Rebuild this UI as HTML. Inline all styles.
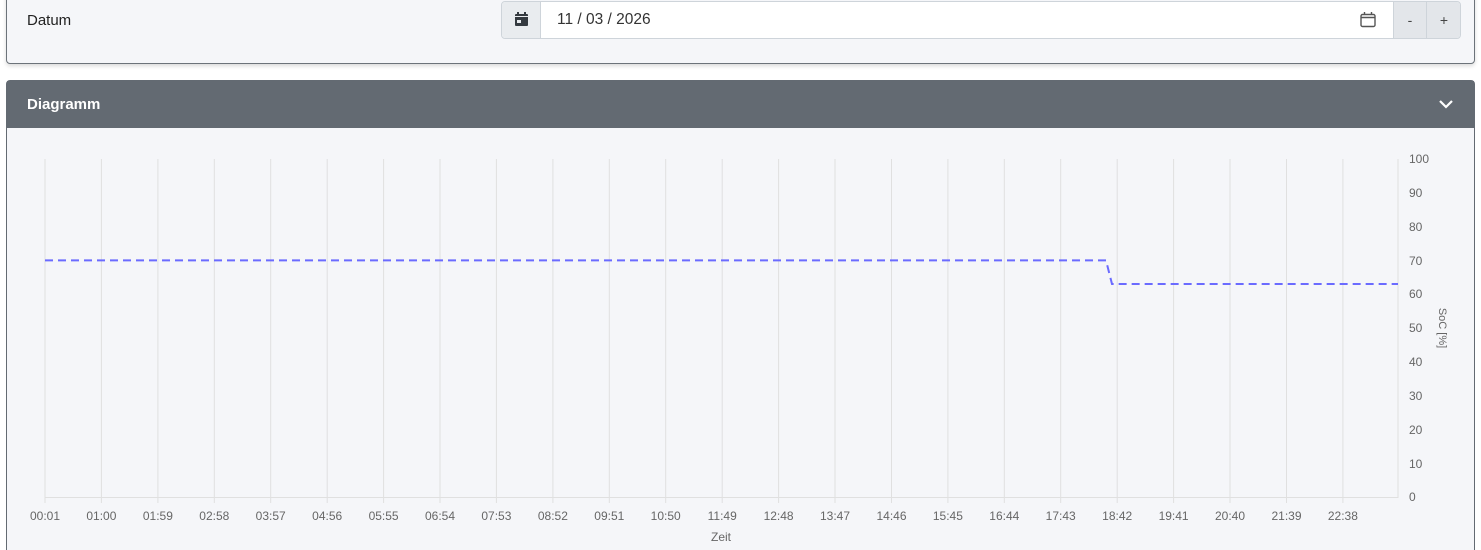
<!DOCTYPE html>
<html style="overflow:hidden;height:550px"><head><meta charset="utf-8"><style>
body{margin:0;background:#fff;width:1481px;height:550px;overflow:hidden;font-family:"Liberation Sans",sans-serif;position:relative}
.card1{position:absolute;left:6px;top:-10px;width:1467px;height:72px;background:#f5f6f9;border:1px solid #6c737a;border-radius:4px;box-shadow:0 2px 4px rgba(0,0,0,.15)}
.lbl{position:absolute;left:20px;top:21px;font-size:15px;color:#222}
.ig{position:absolute;left:501px;top:1px;height:36px;width:958px;border:1px solid #ced4da;border-radius:4px;background:#fff;overflow:hidden}
.ig .pre{position:absolute;left:0;top:0;width:38px;height:36px;background:#e9ecef;border-right:1px solid #ced4da}
.ig .val{position:absolute;left:55px;top:9px;font-size:15.5px;color:#333}
.ig .btn{position:absolute;top:0;height:36px;width:32px;background:#e3e6ea;border-left:1px solid #ced4da;text-align:center;line-height:36px;font-size:14px;color:#444}
.panel{position:absolute;left:6px;top:80px;width:1467px;height:490px;background:#f5f6f9;border:1px solid #636a72;border-radius:4px}
.hdr{height:47px;background:#636a72;color:#fff;font-weight:bold;font-size:15px;line-height:47px;padding-left:20px}
</style></head><body>
<div class="card1"><div class="lbl">Datum</div></div>
<div class="ig">
<div class="pre"><svg width="38" height="36"><rect x="13" y="12" width="13" height="12" rx="1" fill="#343a40"/><rect x="15" y="10" width="2" height="3" fill="#343a40"/><rect x="22" y="10" width="2" height="3" fill="#343a40"/><rect x="13" y="14" width="13" height="1" fill="#e9ecef"/><rect x="15" y="18" width="4" height="3" fill="#e9ecef"/></svg></div>
<div class="val">11 / 03 / 2026</div>
<svg style="position:absolute;left:857px;top:9px" width="18" height="18"><rect x="2" y="3.5" width="14" height="12" rx="1.5" fill="none" stroke="#555" stroke-width="1.4"/><line x1="2" y1="6.5" x2="16" y2="6.5" stroke="#555" stroke-width="1.4"/><line x1="5.5" y1="1" x2="5.5" y2="4" stroke="#555" stroke-width="1.4"/><line x1="12.5" y1="1" x2="12.5" y2="4" stroke="#555" stroke-width="1.4"/></svg>
<div class="btn" style="left:891px">-</div><div class="btn" style="left:924px;width:34px">+</div>
</div>
<div class="panel"><div class="hdr">Diagramm</div>
<svg style="position:absolute;right:20px;top:17px" width="16" height="12"><polyline points="2,3 8,9 14,3" fill="none" stroke="#fff" stroke-width="2.2"/></svg>
</div>
<svg style="position:absolute;left:0;top:0" width="1481" height="550" font-family="Liberation Sans, sans-serif" font-size="12" fill="#666">
<g stroke="#e0e0e0" stroke-width="1">
<line x1="45" y1="159" x2="45" y2="503"/><line x1="101.4" y1="159" x2="101.4" y2="503"/><line x1="157.9" y1="159" x2="157.9" y2="503"/><line x1="214.3" y1="159" x2="214.3" y2="503"/><line x1="270.7" y1="159" x2="270.7" y2="503"/><line x1="327.2" y1="159" x2="327.2" y2="503"/><line x1="383.6" y1="159" x2="383.6" y2="503"/><line x1="440" y1="159" x2="440" y2="503"/><line x1="496.4" y1="159" x2="496.4" y2="503"/><line x1="552.9" y1="159" x2="552.9" y2="503"/><line x1="609.3" y1="159" x2="609.3" y2="503"/><line x1="665.7" y1="159" x2="665.7" y2="503"/><line x1="722.2" y1="159" x2="722.2" y2="503"/><line x1="778.6" y1="159" x2="778.6" y2="503"/><line x1="835" y1="159" x2="835" y2="503"/><line x1="891.5" y1="159" x2="891.5" y2="503"/><line x1="947.9" y1="159" x2="947.9" y2="503"/><line x1="1004.3" y1="159" x2="1004.3" y2="503"/><line x1="1060.7" y1="159" x2="1060.7" y2="503"/><line x1="1117.2" y1="159" x2="1117.2" y2="503"/><line x1="1173.6" y1="159" x2="1173.6" y2="503"/><line x1="1230" y1="159" x2="1230" y2="503"/><line x1="1286.5" y1="159" x2="1286.5" y2="503"/><line x1="1342.9" y1="159" x2="1342.9" y2="503"/>
<line x1="1398" y1="159" x2="1398" y2="498"/>
<line x1="45" y1="497.5" x2="1398" y2="497.5"/>
</g>
<polyline points="45,260.4 1106,260.4 1112,284 1398,284" fill="none" stroke="#6b6bff" stroke-width="2" stroke-dasharray="8,5"/>
<g text-anchor="middle">
<text x="45" y="520">00:01</text><text x="101.4" y="520">01:00</text><text x="157.9" y="520">01:59</text><text x="214.3" y="520">02:58</text><text x="270.7" y="520">03:57</text><text x="327.2" y="520">04:56</text><text x="383.6" y="520">05:55</text><text x="440" y="520">06:54</text><text x="496.4" y="520">07:53</text><text x="552.9" y="520">08:52</text><text x="609.3" y="520">09:51</text><text x="665.7" y="520">10:50</text><text x="722.2" y="520">11:49</text><text x="778.6" y="520">12:48</text><text x="835" y="520">13:47</text><text x="891.5" y="520">14:46</text><text x="947.9" y="520">15:45</text><text x="1004.3" y="520">16:44</text><text x="1060.7" y="520">17:43</text><text x="1117.2" y="520">18:42</text><text x="1173.6" y="520">19:41</text><text x="1230" y="520">20:40</text><text x="1286.5" y="520">21:39</text><text x="1342.9" y="520">22:38</text>
<text x="721" y="541">Zeit</text>
</g>
<g>
<text x="1409" y="163">100</text><text x="1409" y="197">90</text><text x="1409" y="231">80</text><text x="1409" y="265">70</text><text x="1409" y="298">60</text><text x="1409" y="332">50</text><text x="1409" y="366">40</text><text x="1409" y="400">30</text><text x="1409" y="434">20</text><text x="1409" y="468">10</text><text x="1409" y="501">0</text>
</g>
<text transform="translate(1439,328) rotate(90)" text-anchor="middle" font-size="11">SoC [%]</text>
</svg>
</body></html>
